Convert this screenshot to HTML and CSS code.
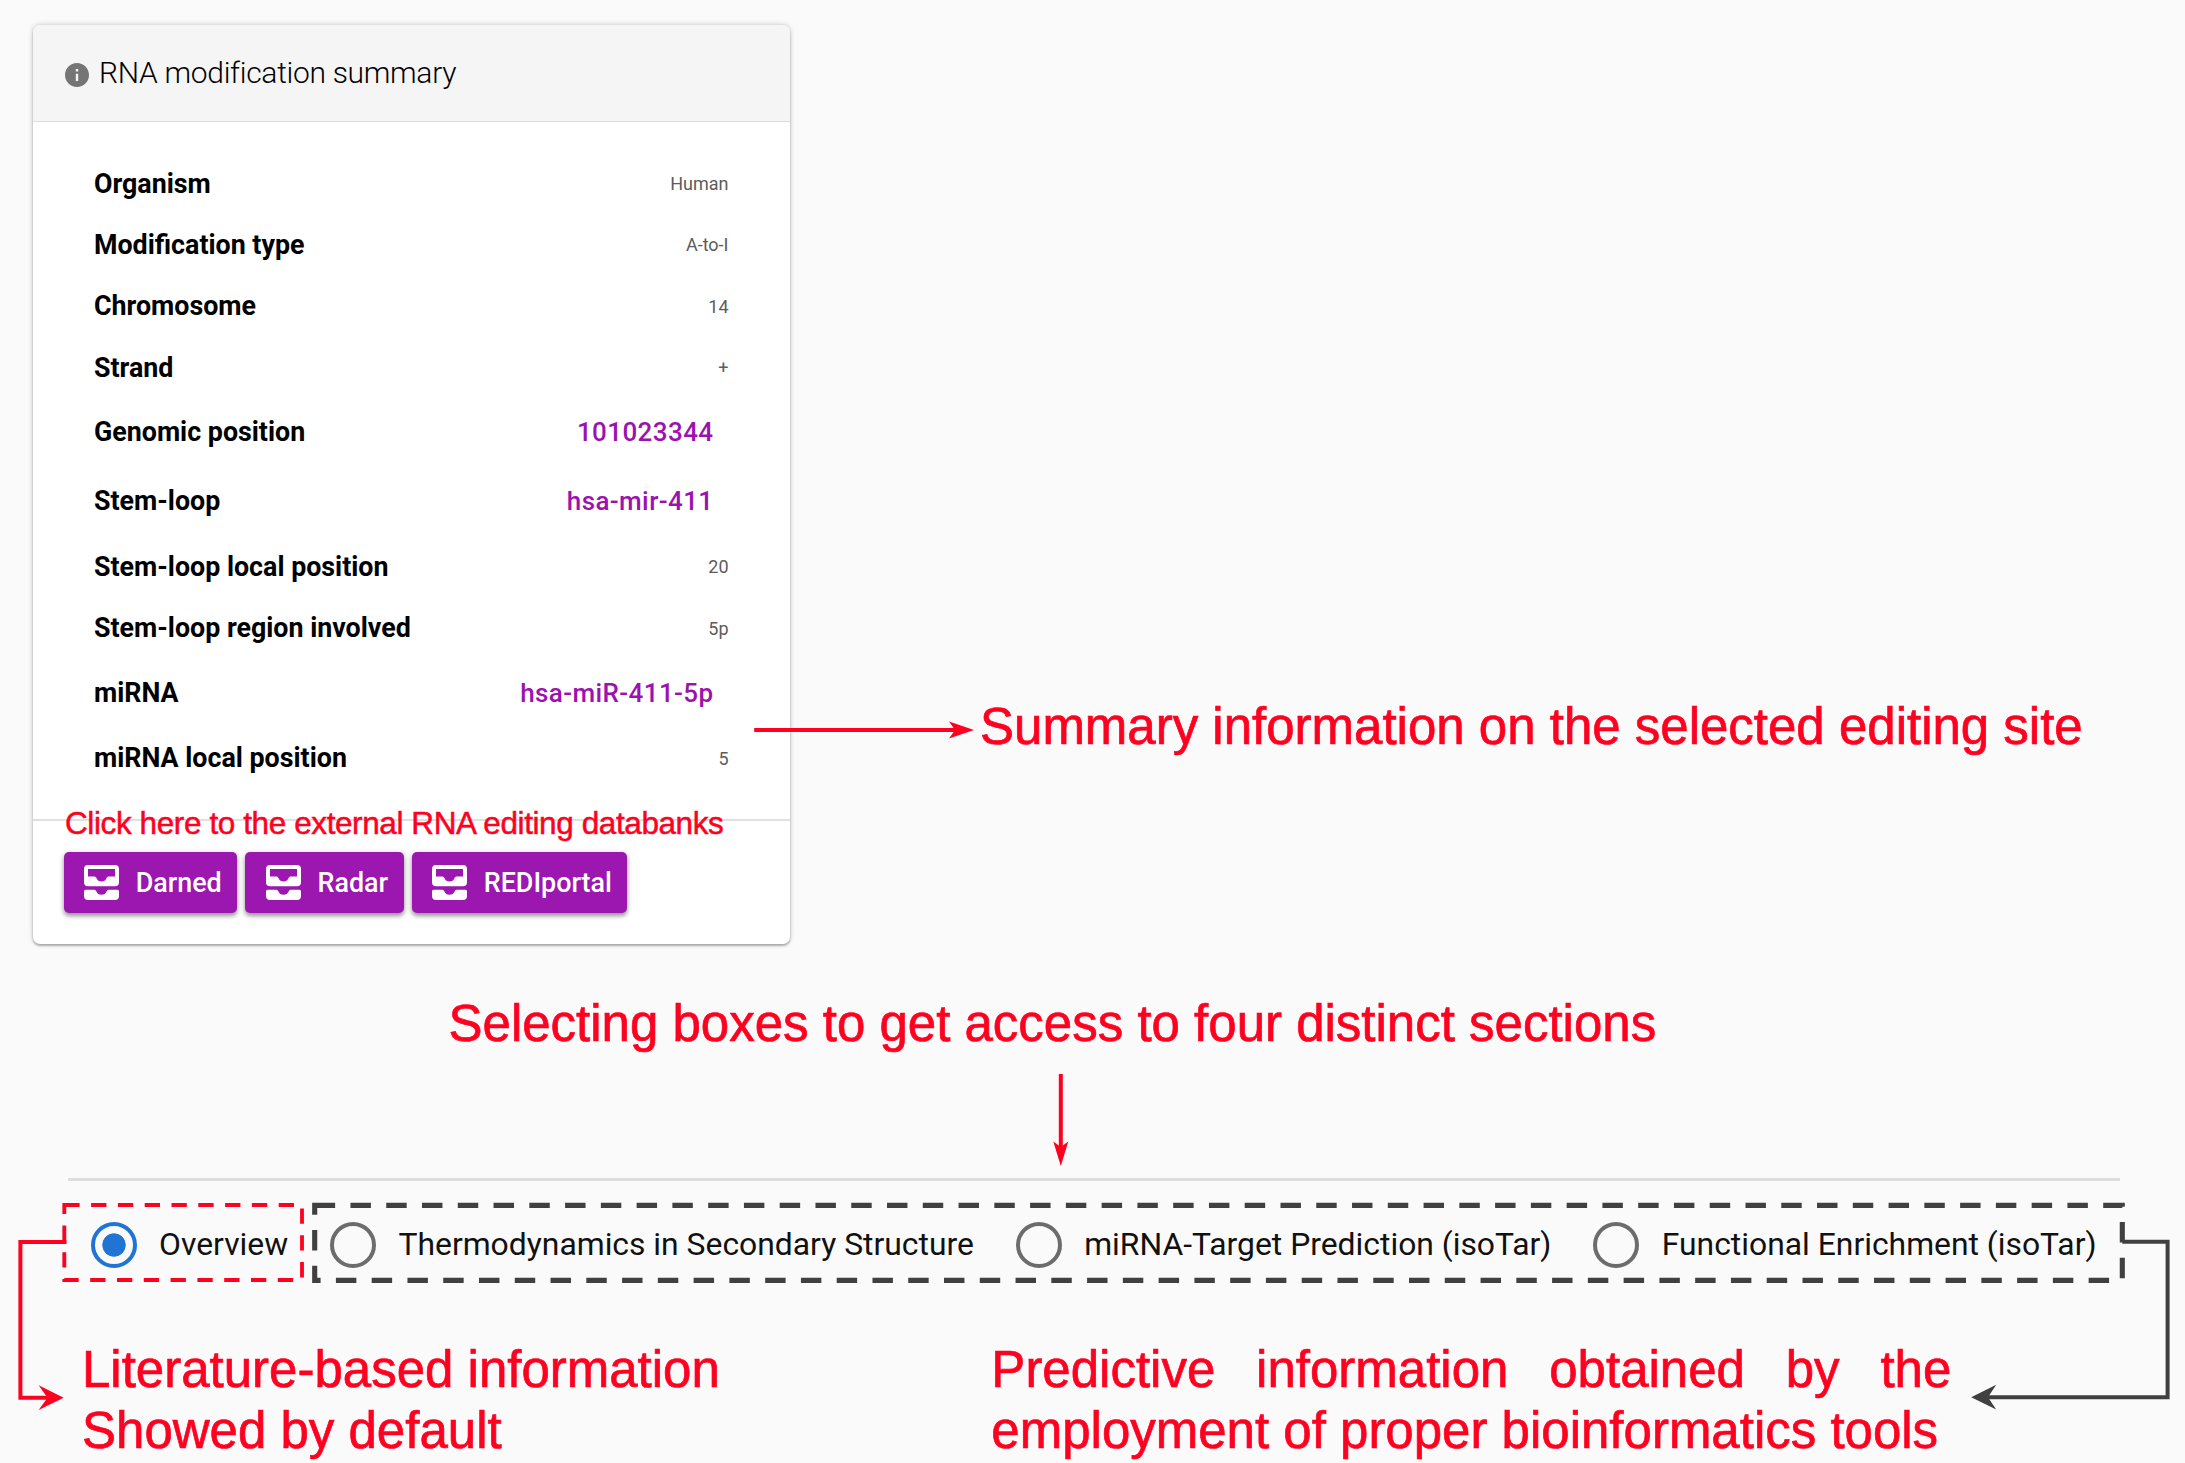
FILE: index.html
```html
<!DOCTYPE html>
<html lang="en">
<head>
<meta charset="utf-8">
<title>RNA modification summary</title>
<link rel="stylesheet" href="styles.css">
</head>
<body>
<svg class="defs" width="0" height="0" aria-hidden="true">
  <symbol id="inbox" viewBox="0 0 35 35">
    <path fill-rule="evenodd" d="M4 0H31A4 4 0 0 1 35 4V17.300A4 4 0 0 1 31 21.300H4A4 4 0 0 1 0 17.300V4A4 4 0 0 1 4 0ZM4 4V11.500H10.500Q12 11.500 12.600 13.300A5.300 5.300 0 0 0 22.400 13.300Q23 11.500 24.500 11.500H31V4Z"/>
    <path d="M1.500 24.700H10.500Q11.800 24.700 12.300 26.300A5.600 5.600 0 0 0 22.700 26.300Q23.200 24.700 24.500 24.700H33.500Q35 24.700 35 26.200V31A4 4 0 0 1 31 35H4A4 4 0 0 1 0 31V26.200Q0 24.700 1.500 24.700Z"/>
  </symbol>
</svg>
<main class="page">
  <div class="top">
    <section class="card">
      <header class="card-header">
        <svg class="info" viewBox="2 2 20 20"><path d="M12 2C6.480 2 2 6.480 2 12s4.480 10 10 10 10-4.480 10-10S17.520 2 12 2zm1 15h-2v-6h2v6zm0-8h-2V7h2v2z"/></svg>
        <h1>RNA modification summary</h1>
      </header>
      <dl class="rows">
        <div class="row"><dt>Organism</dt><dd>Human</dd></div>
        <div class="row"><dt>Modification type</dt><dd>A-to-I</dd></div>
        <div class="row"><dt>Chromosome</dt><dd>14</dd></div>
        <div class="row"><dt>Strand</dt><dd>+</dd></div>
        <div class="row linked"><dt>Genomic position</dt><dd><a>101023344</a></dd></div>
        <div class="row linked"><dt>Stem-loop</dt><dd><a>hsa-mir-411</a></dd></div>
        <div class="row"><dt>Stem-loop local position</dt><dd>20</dd></div>
        <div class="row"><dt>Stem-loop region involved</dt><dd>5p</dd></div>
        <div class="row linked"><dt>miRNA</dt><dd><a>hsa-miR-411-5p</a></dd></div>
        <div class="row"><dt>miRNA local position</dt><dd>5</dd></div>
      </dl>
      <footer class="actions">
        <button class="btn"><svg><use href="#inbox"/></svg><span>Darned</span></button>
        <button class="btn"><svg><use href="#inbox"/></svg><span>Radar</span></button>
        <button class="btn"><svg><use href="#inbox"/></svg><span>REDIportal</span></button>
        <p class="hint">Click here to the external RNA editing databanks</p>
      </footer>
    </section>
    <p class="note note-summary">Summary information on the selected editing site</p>
  </div>
  <p class="note note-select">Selecting boxes to get access to four distinct sections</p>
  <hr class="rule">
  <div class="radios">
    <label class="radio on"><i></i><span>Overview</span></label>
    <label class="radio"><i></i><span>Thermodynamics in Secondary Structure</span></label>
    <label class="radio"><i></i><span>miRNA-Target Prediction (isoTar)</span></label>
    <label class="radio"><i></i><span>Functional Enrichment (isoTar)</span></label>
  </div>
  <div class="bottom">
    <p class="note">Literature-based information<br>Showed by default</p>
    <p class="note note-predict">Predictive information obtained by the employment of proper bioinformatics tools</p>
  </div>
  <svg class="overlay" viewBox="0 0 2185 1463" aria-hidden="true">
    <g class="red">
      <path d="M754.200 730H958"/><path class="head" d="M974 730L949 721.500L955 730L949 738.500Z"/>
      <path d="M1060.800 1074V1150"/><path class="head" d="M1060.800 1166L1053.300 1141.500L1060.800 1147L1068.300 1141.500Z"/>
      <rect class="dash-red" x="64.300" y="1205" width="237.700" height="75"/>
      <path d="M66.500 1242H20.400V1397.700H50"/><path class="head" d="M63.700 1397.700L38.600 1385.300L47.500 1397.700L38.600 1410Z"/>
    </g>
    <g class="dark">
      <rect class="dash-dark" x="314.700" y="1205.400" width="1807.600" height="75"/>
      <path d="M2122.300 1241.800H2167.600V1397.200H1986"/><path class="head" d="M1971.200 1397.200L1996.200 1384.800L1988 1397.200L1996.200 1409.600Z"/>
    </g>
  </svg>
</main>
</body>
</html>
```
FILE: styles.css
```css
* { box-sizing: border-box; margin: 0; padding: 0; }
body { background: #fafafa; font-family: Roboto, sans-serif; color: #000; }
.defs { position: absolute; }
.page { position: relative; width: 2185px; height: 1463px; overflow: hidden; padding-top: 25px; }
.top { display: flex; align-items: flex-start; padding-left: 33px; }
.card { width: 757px; height: 919px; flex: none; background: #fff; border-radius: 7px; box-shadow: 0 2px 2px rgba(0,0,0,.24), 0 0 5px rgba(0,0,0,.24); }
.card-header { display: flex; align-items: center; gap: 10px; height: 97px; padding-left: 32px; background: #f5f5f5; border-bottom: 1px solid #dcdcdc; border-radius: 7px 7px 0 0; }
.info { width: 24px; height: 24px; fill: #757575; margin-top: 3px; }
h1 { font-size: 30px; font-weight: 300; line-height: 40px; letter-spacing: -.3px; white-space: nowrap; }
.rows { padding: 31px 61.500px 30px 61px; height: 697px; }
.row { display: flex; align-items: center; justify-content: space-between; height: 61.300px; }
.row.linked { height: 69px; }
dt { font-size: 26.800px; font-weight: 700; white-space: nowrap; }
dd { font-size: 18px; color: #5c5c5c; font-weight: 400; }
dd a { font-size: 26px; font-weight: 500; color: #9c12b0; margin-right: 15px; letter-spacing: .4px; }
.row.linked dt, .row.linked dd { padding-bottom: 1px; }
.actions { position: relative; display: flex; gap: 8px; height: 125px; padding: 31px 0 0 30.500px; border-top: 2px solid #e0e0e0; }
.btn { display: flex; align-items: center; height: 61px; border: 0; border-radius: 5px; background: #9c16b0; color: #fff; font: 500 26.900px Roboto, sans-serif; padding: 0 15.500px 0 20.500px; gap: 16.700px; box-shadow: 0 3px 4px rgba(0,0,0,.35), 0 1px 6px rgba(0,0,0,.15); }
.btn svg { width: 35px; height: 35px; fill: #fff; }
.hint { position: absolute; left: 32px; top: -16px; font: 31.500px/36px "Liberation Sans", Arial, sans-serif; letter-spacing: -.4px; color: #ff0020; -webkit-text-stroke: .5px #ff0020; white-space: nowrap; }
.note { font: 51px/61px "Liberation Sans", Arial, sans-serif; color: #ff0020; -webkit-text-stroke: .7px #ff0020; white-space: nowrap; }
.note-summary { margin: 671px 0 0 190px; }
.note-select { margin: 49px 0 0 448.500px; }
.rule { height: 3px; border: 0; margin: 124px 65px 0 68px; background: #dedede; }
.radios { display: flex; align-items: center; height: 75px; margin-top: 26px; padding-left: 90.600px; }
.radio { display: flex; align-items: center; gap: 22.500px; font-size: 31.850px; color: #111; white-space: nowrap; }
.radio span { padding-bottom: 2px; }
.radio i { width: 46px; height: 46px; border: 4px solid #6c6c6c; border-radius: 50%; }
.radio.on i { border-color: #1f74d4; background: radial-gradient(circle, #1f74d4 11.300px, transparent 12px); }
.radio + .radio { margin-left: 41.800px; }
.bottom { display: flex; margin-top: 57px; padding-left: 82px; }
.note-predict { width: 960px; margin-left: 271.500px; white-space: normal; text-align: justify; }
.overlay { position: absolute; left: 0; top: 0; width: 2185px; height: 1463px; fill: none; pointer-events: none; }
.red { stroke: #ff0020; stroke-width: 4; }
.dark { stroke: #404040; stroke-width: 4; }
.head { stroke: none; }
.red .head { fill: #ff0020; }
.dark .head { fill: #404040; }
.dash-red { stroke-width: 3.830; stroke-dasharray: 15.300 11.500; }
.dash-dark { stroke-width: 5.100; stroke-dasharray: 20.440 15.330; }
```
